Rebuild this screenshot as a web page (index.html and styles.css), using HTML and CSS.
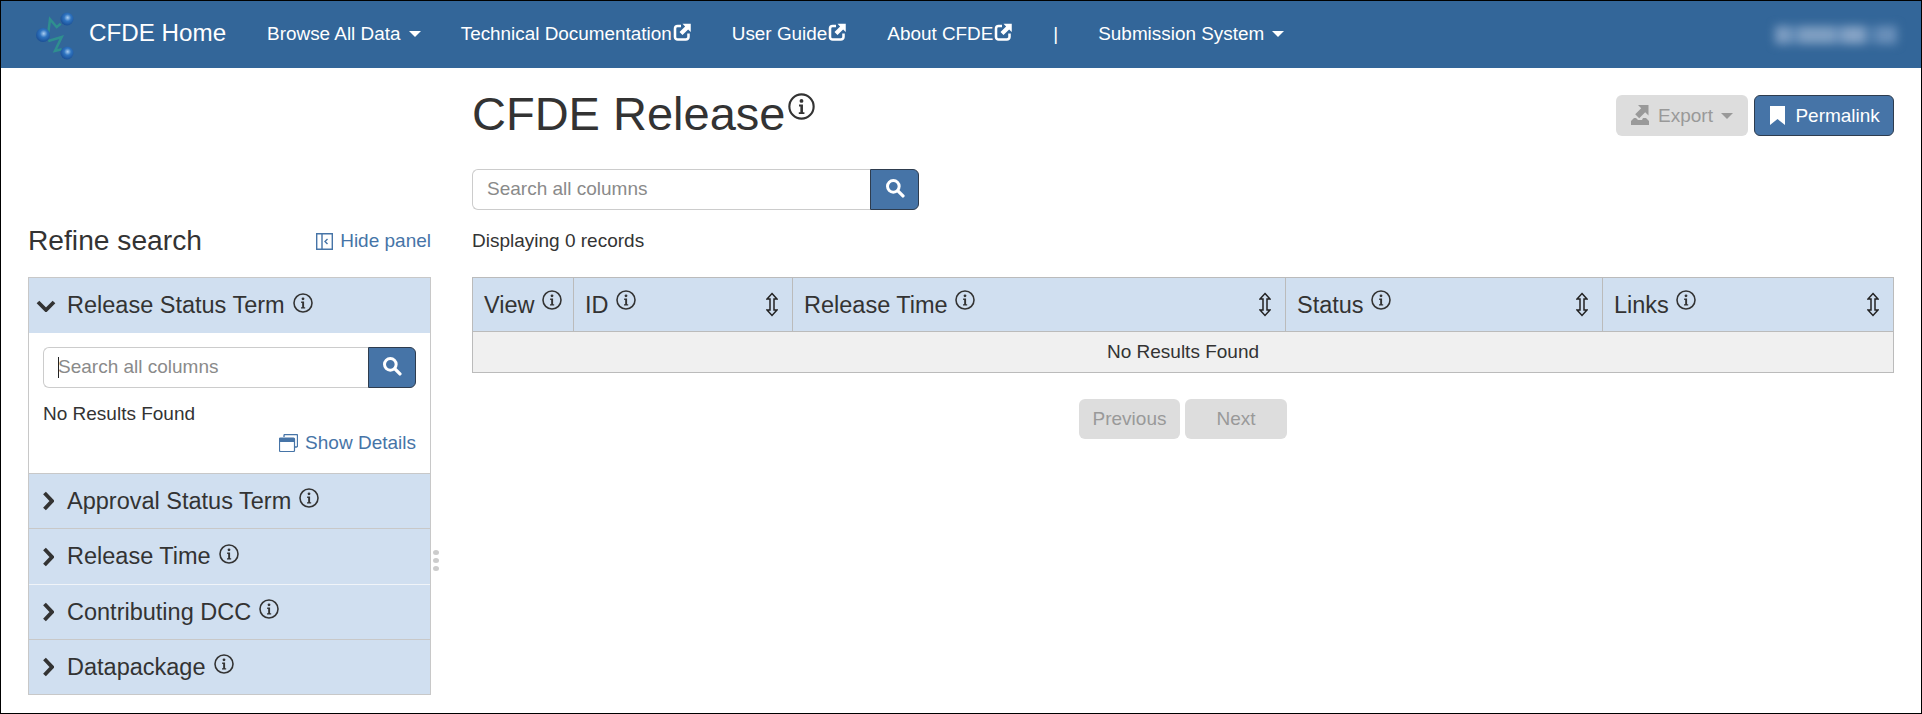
FILE: index.html
```html
<!DOCTYPE html>
<html lang="en">
<head>
    <meta charset="UTF-8">
    <title>CFDE Release</title>
    <link rel="stylesheet" href="styles.css">
</head>
<body>
    <svg class="defs" width="0" height="0">
      <defs>
        <radialGradient id="ball" cx="55%" cy="40%" r="60%">
          <stop offset="0" stop-color="#a9cdf0"/>
          <stop offset="0.45" stop-color="#2f74c0"/>
          <stop offset="1" stop-color="#1a4f96"/>
        </radialGradient>
        <symbol id="i-info" viewBox="0 0 24 24">
          <circle cx="12" cy="12" r="10.8" fill="none" stroke="currentColor" stroke-width="1.900"/>
          <circle cx="12" cy="7" r="1.700" fill="currentColor"/>
          <path d="M9.800 10.200h3.500v6.800h1.300v1.700H9.600V17h1.400v-5.100H9.800z" fill="currentColor"/>
        </symbol>
        <symbol id="i-sort" viewBox="0 0 12 24">
          <path d="M6 1l5 5.500H8v11h3L6 23l-5-5.500h3v-11H1z" fill="none" stroke="currentColor" stroke-width="1.500"/>
        </symbol>
        <symbol id="i-search" viewBox="0 0 24 24">
          <circle cx="10" cy="10" r="7" fill="none" stroke="currentColor" stroke-width="3.600"/>
          <path d="M15.500 15.500l6 6" fill="none" stroke="currentColor" stroke-width="4" stroke-linecap="round"/>
        </symbol>
        <symbol id="i-external" viewBox="0 0 24 24">
          <path d="M10 4H5.500A3.500 3.500 0 0 0 2 7.500v11A3.500 3.500 0 0 0 5.500 22h11a3.500 3.500 0 0 0 3.500-3.500V14" fill="none" stroke="currentColor" stroke-width="3.400"/>
          <path d="M12 1h11v11l-3.500-3.500L12 16l-4-4 7.500-7.500z" fill="currentColor"/>
        </symbol>
        <symbol id="i-down" viewBox="0 0 20 12">
          <path d="M2 2l8 8 8-8" fill="none" stroke="currentColor" stroke-width="3.800"/>
        </symbol>
        <symbol id="i-right" viewBox="0 0 12 20">
          <path d="M2.500 2L10 10l-7.500 8" fill="none" stroke="currentColor" stroke-width="3.800"/>
        </symbol>
      </defs>
    </svg>

    <div class="frame">
      <nav class="navbar">
        <a class="brand">
          <svg class="logo" width="40" height="52" viewBox="0 0 40 52">
            <path d="M14.300 23.700L16 10.300l6.700 7.700 4-3.300M14.300 32l13.400-4L21 42l6.700-1.700" fill="none" stroke="#2f8f8f" stroke-width="2.500"/>
            <circle cx="33" cy="10" r="6.500" fill="url(#ball)"/>
            <circle cx="9" cy="26" r="7" fill="url(#ball)"/>
            <circle cx="33" cy="44" r="6.500" fill="url(#ball)"/>
          </svg>
          <span class="brand-name">CFDE Home</span>
        </a>
        <ul class="nav-items">
          <li>Browse All Data <span class="caret"></span></li>
          <li>Technical Documentation<svg class="ext"><use href="#i-external"/></svg></li>
          <li>User Guide<svg class="ext"><use href="#i-external"/></svg></li>
          <li>About CFDE<svg class="ext"><use href="#i-external"/></svg></li>
          <li>|</li>
          <li>Submission System <span class="caret"></span></li>
        </ul>
        <div class="user-blur"></div>
      </nav>

      <div class="content">
        <aside class="sidebar">
          <div class="side-head">
            <h2>Refine search</h2>
            <a class="link hide-panel">
              <svg class="panel-icon" viewBox="0 0 17 17">
                <path d="M.7.7h15.600v15.600H.7zM6 .7v15.600" fill="none" stroke="currentColor" stroke-width="1.400"/>
                <path d="M11.500 6l-2.500 2.500 2.500 2.500" fill="none" stroke="currentColor" stroke-width="1.400"/>
              </svg>
              Hide panel
            </a>
          </div>

          <div class="filters">
            <div class="filter-head open">
              <svg class="chev-down"><use href="#i-down"/></svg>
              <span>Release Status Term</span>
              <svg class="info"><use href="#i-info"/></svg>
            </div>
            <div class="filter-body">
              <div class="search filter-search">
                <input type="text" placeholder="Search all columns">
                <i class="text-cursor"></i>
                <button><svg class="search-icon"><use href="#i-search"/></svg></button>
              </div>
              <div class="no-results">No Results Found</div>
              <a class="link show-details">
                <svg class="details-icon" viewBox="0 0 19 18">
                  <path d="M5 3V1.500A1 1 0 0 1 6 .5h11.500a1 1 0 0 1 1 1V12a1 1 0 0 1-1 1H16" fill="none" stroke="currentColor" stroke-width="1.300"/>
                  <path d="M1.500 4h13a1 1 0 0 1 1 1v11.500a1 1 0 0 1-1 1h-13a1 1 0 0 1-1-1V5a1 1 0 0 1 1-1z" fill="#fff" stroke="currentColor" stroke-width="1.200"/>
                  <path d="M1.500 4h13a1 1 0 0 1 1 1v3H.5V5a1 1 0 0 1 1-1z" fill="currentColor"/>
                </svg>
                Show Details
              </a>
            </div>
            <div class="filter-head closed">
              <svg class="chev-right"><use href="#i-right"/></svg>
              <span>Approval Status Term</span>
              <svg class="info"><use href="#i-info"/></svg>
            </div>
            <div class="filter-head closed light-line">
              <svg class="chev-right"><use href="#i-right"/></svg>
              <span>Release Time</span>
              <svg class="info"><use href="#i-info"/></svg>
            </div>
            <div class="filter-head closed">
              <svg class="chev-right"><use href="#i-right"/></svg>
              <span>Contributing DCC</span>
              <svg class="info"><use href="#i-info"/></svg>
            </div>
            <div class="filter-head closed">
              <svg class="chev-right"><use href="#i-right"/></svg>
              <span>Datapackage</span>
              <svg class="info"><use href="#i-info"/></svg>
            </div>
          </div>
        </aside>

        <div class="handle"><i></i><i></i><i></i></div>

        <main class="main">
          <div class="title-row">
            <h1>CFDE Release<svg class="info-big"><use href="#i-info"/></svg></h1>
            <div class="actions">
              <button class="btn disabled">
                <svg class="export-icon" viewBox="0 0 18 20">
                  <path d="M7 0h10.500v10.500l-3.300-3.300-6 6-4-4 6-6zM0 16l3-3h2l2 2h4l1-2h3l3 3v4H0z" fill="currentColor"/>
                </svg>
                Export <span class="caret"></span>
              </button>
              <button class="btn primary">
                <svg class="bookmark" viewBox="0 0 15 19"><path d="M0 0h15v19l-7.500-6L0 19z" fill="currentColor"/></svg>
                Permalink
              </button>
            </div>
          </div>

          <div class="search main-search">
            <input type="text" placeholder="Search all columns">
            <button><svg class="search-icon"><use href="#i-search"/></svg></button>
          </div>

          <div class="count">Displaying 0 records</div>

          <table class="results">
            <thead>
              <tr>
                <th class="col-view"><div class="th-in"><span>View <svg class="info"><use href="#i-info"/></svg></span></div></th>
                <th class="col-id"><div class="th-in"><span>ID <svg class="info"><use href="#i-info"/></svg></span><svg class="sort"><use href="#i-sort"/></svg></div></th>
                <th class="col-time"><div class="th-in"><span>Release Time <svg class="info"><use href="#i-info"/></svg></span><svg class="sort"><use href="#i-sort"/></svg></div></th>
                <th class="col-status"><div class="th-in"><span>Status <svg class="info"><use href="#i-info"/></svg></span><svg class="sort"><use href="#i-sort"/></svg></div></th>
                <th class="col-links"><div class="th-in"><span>Links <svg class="info"><use href="#i-info"/></svg></span><svg class="sort"><use href="#i-sort"/></svg></div></th>
              </tr>
            </thead>
            <tbody>
              <tr><td colspan="5">No Results Found</td></tr>
            </tbody>
          </table>

          <div class="pager">
            <button class="btn disabled pg-prev">Previous</button>
            <button class="btn disabled pg-next">Next</button>
          </div>
        </main>
      </div>
    </div>
</body>
</html>
```

FILE: styles.css
```css
* {
  box-sizing: border-box;
}
html, body {
  margin: 0;
  padding: 0;
}
body {
  font-family: "Liberation Sans", Arial, sans-serif;
  font-size: 19px;
  color: #333;
  background: #fff;
}
.defs {
  position: absolute;
}
.frame {
  height: 714px;
  border: 1px solid #000;
  overflow: hidden;
}

/* top bar */
.navbar {
  display: flex;
  align-items: center;
  height: 67px;
  background: #336699;
  color: #fff;
}
.brand {
  display: flex;
  align-items: center;
  margin-left: 33px;
  font-size: 24.200px;
}
.brand-name {
  margin-bottom: 3px;
}
.logo {
  margin-right: 15px;
}
.nav-items {
  display: flex;
  list-style: none;
  margin: 0 0 2px 21px;
  padding: 0;
  font-size: 18.900px;
}
.nav-items li {
  padding: 0 20px;
  white-space: nowrap;
}
.ext {
  width: 19px;
  height: 18px;
  margin-left: 1px;
  vertical-align: -1px;
}
.caret {
  display: inline-block;
  width: 0;
  height: 0;
  margin-left: 3px;
  vertical-align: 3px;
  border-top: 6px solid currentColor;
  border-left: 6px solid transparent;
  border-right: 6px solid transparent;
}
.user-blur {
  width: 122px;
  height: 18px;
  margin-left: auto;
  margin-right: 24px;
  background: linear-gradient(90deg, #7d9dc2 0 12%, #5f89b5 12% 20%, #7f9fc2 20% 48%, #6a90ba 48% 56%, #86a4c6 56% 74%, #4f7cab 74% 84%, #6a90ba 84% 100%);
  filter: blur(5px);
}

/* page */
.content {
  display: flex;
}
.link {
  color: #4674a7;
}
.sidebar {
  width: 403px;
  margin-left: 27px;
  padding-top: 150px;
}
.side-head {
  display: flex;
  justify-content: space-between;
  align-items: center;
  height: 46px;
  margin-bottom: 13px;
}
.side-head h2 {
  margin: 0 0 2px;
  font-size: 28.200px;
  font-weight: normal;
}
.hide-panel {
  display: flex;
  align-items: center;
}
.panel-icon {
  width: 17px;
  height: 17px;
  margin-right: 7px;
}
.filters {
  border: 1px solid #c8c8c8;
  border-bottom: 0;
}
.filter-head {
  display: flex;
  align-items: center;
  height: 55px;
  font-size: 23.500px;
  background: #d0dff0;
  border-bottom: 1px solid #c8c8c8;
}
.filter-head.open {
  border-bottom: 0;
}
.filter-head span {
  margin-left: 11px;
}
.filter-head .chev-down {
  width: 20px;
  height: 12px;
  margin-left: 7px;
}
.filter-head .chev-right {
  width: 12px;
  height: 20px;
  margin-left: 13px;
}
.filter-head.closed span {
  margin-left: 13px;
}
.filter-head.light-line {
  height: 56px;
  border-bottom-color: #f0f4f9;
}
.filter-body {
  height: 141px;
  padding: 14px 14px 0;
  background: #fff;
  border-bottom: 1px solid #c8c8c8;
}
.info {
  width: 20px;
  height: 20px;
  margin-left: 8px;
  position: relative;
  top: -3px;
}
.search {
  position: relative;
  display: flex;
  height: 41px;
}
.search input {
  flex: 1;
  min-width: 0;
  padding: 0 14px 2px;
  font: inherit;
  color: #333;
  border: 1px solid #ccc;
  border-right: 0;
  border-radius: 6px 0 0 6px;
  outline: none;
}
.search input::placeholder {
  color: #8a8a8a;
}
.text-cursor {
  position: absolute;
  left: 15px;
  top: 10px;
  width: 1px;
  height: 21px;
  background: #222;
}
.search button {
  display: flex;
  align-items: center;
  justify-content: center;
  width: 48px;
  padding: 0;
  color: #fff;
  background: #4674a7;
  border: 1px solid #2e3c4e;
  border-radius: 0 6px 6px 0;
}
.search-icon {
  width: 20px;
  height: 20px;
  margin-bottom: 3px;
}
.no-results {
  margin-top: 15px;
  line-height: 22px;
}
.show-details {
  display: flex;
  justify-content: flex-end;
  align-items: center;
  margin-top: 7px;
}
.details-icon {
  width: 19px;
  height: 18px;
  margin-right: 7px;
}
.handle {
  display: flex;
  flex-direction: column;
  gap: 3px;
  width: 41px;
  padding: 482px 0 0 2px;
}
.handle i {
  display: block;
  width: 6px;
  height: 5px;
  border-radius: 50%;
  background: #ccc;
}
.main {
  width: 1422px;
}
.title-row {
  display: flex;
  justify-content: space-between;
  height: 101px;
}
h1 {
  margin: 18px 0 0;
  font-size: 47px;
  line-height: 56px;
  font-weight: normal;
}
.info-big {
  width: 27px;
  height: 27px;
  margin-left: 3px;
  vertical-align: 10px;
}
.actions {
  display: flex;
  gap: 6px;
  height: 41px;
  margin-top: 27px;
}
.btn {
  font: inherit;
  padding: 0;
  border-radius: 6px;
  border: 1px solid transparent;
}
.btn.disabled {
  color: #999;
  background: #ddd;
}
.btn.primary {
  color: #fff;
  background: #4674a7;
  border-color: #2e3c4e;
}
.actions .disabled {
  width: 132px;
}
.actions .primary {
  width: 140px;
}
.export-icon {
  width: 18px;
  height: 20px;
  margin-right: 4px;
  vertical-align: -3px;
}
.bookmark {
  width: 15px;
  height: 19px;
  margin-left: 2px;
  margin-right: 5px;
  vertical-align: -3px;
}
.main-search {
  width: 447px;
}
.main-search button {
  width: 49px;
}
.count {
  margin-top: 20px;
  line-height: 22px;
}

/* results table */
.results {
  width: 1422px;
  margin-top: 25px;
  table-layout: fixed;
  border-collapse: collapse;
}
.results th, .results td {
  padding: 0;
  border: 1px solid #bbb;
}
.results th {
  height: 54px;
  font-size: 23.500px;
  font-weight: normal;
  text-align: left;
  background: #d0dff0;
}
.th-in {
  display: flex;
  justify-content: space-between;
  align-items: center;
  padding: 0 14px 0 11px;
  white-space: nowrap;
}
.th-in .info {
  top: 0;
  margin-left: 1px;
  vertical-align: 3px;
}
.col-view { width: 101px; }
.col-id { width: 219px; }
.col-time { width: 493px; }
.col-status { width: 317px; }
.sort {
  width: 12px;
  height: 25px;
  color: #222;
}
.results td {
  height: 41px;
  text-align: center;
  background: #f0f0f0;
}
.pager {
  display: flex;
  justify-content: center;
  gap: 5px;
  height: 40px;
  margin-top: 26px;
}
.pg-prev {
  width: 101px;
}
.pg-next {
  width: 102px;
}
```
